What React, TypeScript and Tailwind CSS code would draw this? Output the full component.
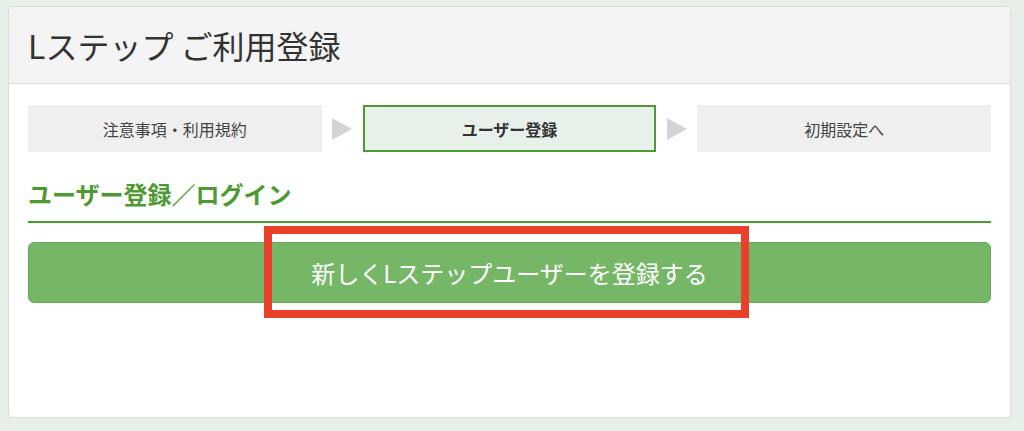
const font = { fontFamily: '"Noto Sans CJK JP", "Noto Sans", sans-serif' }

function Step({ label, active }: { label: string; active?: boolean }) {
  return (
    <div
      className={
        active
          ? 'flex h-[47px] w-[294px] items-center justify-center border-2 border-[#4e9a32] bg-[#e7f0e9] text-[16px] font-bold text-[#333]'
          : 'flex h-[47px] w-[294px] items-center justify-center bg-[#efefef] text-[16px] text-[#444]'
      }
    >
      {label}
    </div>
  )
}

function Arrow() {
  return (
    <div className="flex w-[41px] items-center justify-center">
      <svg width="20" height="22" viewBox="0 0 20 22">
        <polygon points="0,0 20,11 0,22" fill="#d4d4d4" />
      </svg>
    </div>
  )
}

export default function App() {
  return (
    <div className="h-[431px] w-[1024px] bg-[#e6efe8] pl-[8px] pr-[13px] pt-[6px]" style={font}>
      <div className="h-[412px] overflow-hidden rounded-[4px] border border-[#dcdcdc] bg-white">
        {/* Header */}
        <div className="flex h-[77px] items-center border-b border-[#dadada] bg-[#f4f4f4] pl-[19px]">
          <h1 className="text-[32px] leading-none text-[#333]">Lステップ ご利用登録</h1>
        </div>

        <div className="px-[19px] pt-[21px]">
          {/* Steps */}
          <div className="flex">
            <Step label="注意事項・利用規約" />
            <Arrow />
            <Step label="ユーザー登録" active />
            <Arrow />
            <Step label="初期設定へ" />
          </div>

          {/* Section heading */}
          <h2 className="mt-[27px] border-b-2 border-[#4e9a32] pb-[12px] text-[24px] font-bold leading-[30px] text-[#4e9a32]">
            ユーザー登録／ログイン
          </h2>

          {/* Register button */}
          <div className="relative mt-[19px]">
            <button className="flex h-[61px] w-full items-center justify-center rounded-[6px] border border-[#6aa95b] bg-[#76b767] text-[24px] text-white">
              新しくLステップユーザーを登録する
            </button>
            <div className="pointer-events-none absolute left-[236px] top-[-16px] h-[92px] w-[485px] border-[8px] border-[#e9402b]" />
          </div>
        </div>
      </div>
    </div>
  )
}
